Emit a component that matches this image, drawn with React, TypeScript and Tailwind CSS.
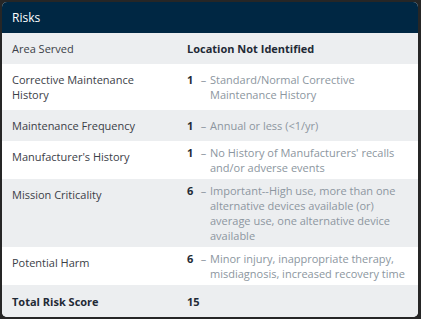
const rows = [
  { label: 'Area Served', value: 'Location Not Identified', bold: true },
  { label: 'Corrective Maintenance History', score: '1', text: 'Standard/Normal Corrective Maintenance History' },
  { label: 'Maintenance Frequency', score: '1', text: 'Annual or less (<1/yr)' },
  { label: "Manufacturer's History", score: '1', text: "No History of Manufacturers' recalls and/or adverse events" },
  {
    label: 'Mission Criticality',
    score: '6',
    text: 'Important--High use, more than one alternative devices available (or) average use, one alternative device available',
  },
  { label: 'Potential Harm', score: '6', text: 'Minor injury, inappropriate therapy, misdiagnosis, increased recovery time' },
];

export default function App() {
  return (
    <div className="w-[421px] h-[319px] bg-[#262626] pt-[2px] pl-[2px] pr-[3px] pb-[2px] font-['Open_Sans',sans-serif] text-[11px] leading-[15px]">
      <div className="h-full bg-white rounded-[5px] overflow-hidden flex flex-col">
        {/* Header */}
        <div className="h-[31px] shrink-0 bg-[#002743] text-white text-[12px] flex items-center px-[10px]">Risks</div>

        {rows.map((row, i) => (
          <div key={row.label} className={`flex items-stretch px-[10px] ${i % 2 === 0 ? 'bg-[#eceef0]' : 'bg-white'}`}>
            <div className="w-[175px] shrink-0 py-[8px] pr-4 text-[#3b4047]">{row.label}</div>
            {row.bold ? (
              <div className="flex items-center py-[4px] font-bold text-[#1f2a36]">{row.value}</div>
            ) : (
              <div className="flex flex-1 items-center py-[4px]">
                <div className="flex w-full">
                  <span className="w-[10px] shrink-0 font-bold text-[#1f2a36]">{row.score}</span>
                  <span className="w-[13px] shrink-0 text-center text-[#8c96a0]">–</span>
                  <span className="flex-1 text-[#8c96a0]">{row.text}</span>
                </div>
              </div>
            )}
          </div>
        ))}

        {/* Total */}
        <div className="flex-1 flex items-center px-[10px] bg-[#eceef0] font-bold text-[#1f2a36]">
          <div className="w-[175px] shrink-0">Total Risk Score</div>
          <div>15</div>
        </div>
      </div>
    </div>
  );
}
